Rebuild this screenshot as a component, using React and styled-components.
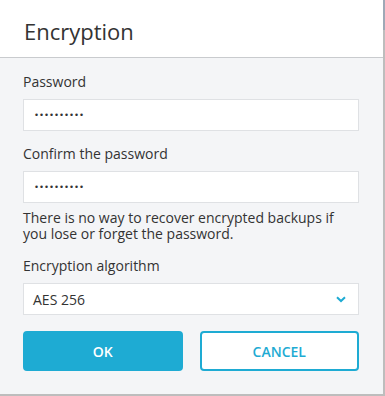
import React, {useState} from 'react'
import styled, {createGlobalStyle} from 'styled-components'

const GlobalStyle = createGlobalStyle`
    html, body {
        margin: 0;
        padding: 0;
        background: #ffffff;
    }
    body {
        font-family: "Open Sans", "Noto Sans", sans-serif;
        color: #333;
    }
`

const Dialog = styled.div`
    width: 383px;
    height: 394px;
    display: flex;
    flex-direction: column;
    background: #f4f5f7;
    border-right: 2px solid #bdbdbd;
    border-bottom: 2px solid #bdbdbd;
    position: relative;
`

const ScrollThumb = styled.div`
    position: absolute;
    top: 0;
    right: -2px;
    width: 2px;
    height: 30px;
    background: #9ea8b6;
`

const Header = styled.div`
    height: 57px;
    background: #fff;
    border-bottom: 1px solid #c9cbce;
    display: flex;
    align-items: center;
    padding: 0 24px;
    flex-shrink: 0;
`

const Title = styled.h2`
    margin: 0;
    font-size: 22px;
    font-weight: 400;
    color: #333;
    padding-top: 5px;
`

const Body = styled.form`
    padding: 14px 24px 0 23px;
    display: flex;
    flex-direction: column;
`

const Field = styled.div`
    display: flex;
    flex-direction: column;
    margin-bottom: ${p => p.$mb || 0}px;
`

const Label = styled.label`
    font-size: 14px;
    line-height: 20px;
    color: #333;
    margin-bottom: 7px;
`

const Input = styled.input`
    box-sizing: border-box;
    height: 32px;
    width: 100%;
    border: 1px solid #dfe1e4;
    background: #fff;
    padding: 0 10px;
    font-size: 8.5px;
    color: #333;
    font-family: "DejaVu Sans", sans-serif;
    outline: none;
`

const Note = styled.p`
    margin: 7px 0 14px;
    font-size: 14px;
    line-height: 16px;
    color: #333;
`

const SelectBox = styled.div`
    box-sizing: border-box;
    height: 32px;
    border: 1px solid #dfe1e4;
    background: #fff;
    display: flex;
    align-items: center;
    justify-content: space-between;
    padding: 0 12px 0 9px;
    font-size: 14px;
    color: #333;
    cursor: pointer;
`

const Buttons = styled.div`
    display: grid;
    grid-template-columns: 1fr 1fr;
    gap: 17px;
    margin-top: 16px;
`

const Button = styled.button`
    height: 40px;
    border-radius: 4px;
    font-family: "Open Sans", sans-serif;
    font-size: 14px;
    font-weight: 600;
    cursor: pointer;
    box-sizing: border-box;
    background: ${p => p.$primary ? '#1eabd3' : '#fff'};
    color: ${p => p.$primary ? '#fff' : '#1eabd3'};
    border: 2px solid #1eabd3;
`

const Chevron = () => (
    <svg width="10" height="7" viewBox="0 0 10 7">
        <path d="M1 1.2 L5 5 L9 1.2" fill="none" stroke="#1eabd3" strokeWidth="2" />
    </svg>
)

const App = () => {
    const [formData, setForm] = useState({
        password: 'secretpass',
        confirm: 'secretpass',
    })

    const onChange = (e) => {
        setForm({...formData, [e.target.name]: e.target.value})
    }

    return (
        <>
            <GlobalStyle />
            <Dialog>
                <ScrollThumb />
                <Header>
                    <Title>Encryption</Title>
                </Header>
                <Body onSubmit={e => e.preventDefault()}>
                    <Field $mb={13}>
                        <Label>Password</Label>
                        <Input type="password" name="password" value={formData.password} onChange={e => onChange(e)} />
                    </Field>
                    <Field>
                        <Label>Confirm the password</Label>
                        <Input type="password" name="confirm" value={formData.confirm} onChange={e => onChange(e)} />
                    </Field>
                    <Note>There is no way to recover encrypted backups if you lose or forget the password.</Note>
                    <Field>
                        <Label>Encryption algorithm</Label>
                        <SelectBox>
                            <span>AES 256</span>
                            <Chevron />
                        </SelectBox>
                    </Field>
                    <Buttons>
                        <Button $primary type="submit">OK</Button>
                        <Button type="button">CANCEL</Button>
                    </Buttons>
                </Body>
            </Dialog>
        </>
    )
}

export default App
